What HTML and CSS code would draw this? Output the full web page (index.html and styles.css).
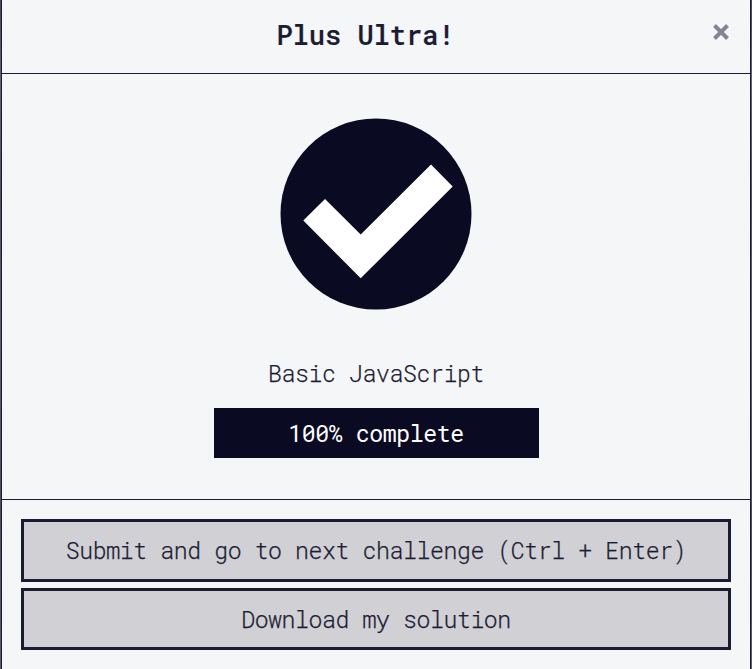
FILE: index.html
```
<!DOCTYPE html>
<html lang="en">
<head>
<meta charset="utf-8">
<title>Plus Ultra!</title>
<link rel="stylesheet" href="styles.css">
</head>
<body>
<div class="modal">
  <header class="modal-header">
    <h1 class="title">Plus Ultra!</h1>
    <button class="close" aria-label="Close"><svg width="18" height="16" viewBox="0 0 18 16"><path d="M2.5 1.5 15.5 14.5M15.5 1.5 2.5 14.5"/></svg></button>
  </header>
  <main class="modal-body">
    <svg class="check" width="192" height="192" viewBox="0 0 192 192">
      <circle cx="96" cy="96" r="95.5"/>
      <path d="M23.3 102.5 45 81 80.7 116.5 151 46.5 172.7 68.5 80.7 160.3Z"/>
    </svg>
    <p class="course">Basic JavaScript</p>
    <div class="progress">100% complete</div>
  </main>
  <footer class="modal-footer">
    <button class="btn btn-submit">Submit and go to next challenge (Ctrl + Enter)</button>
    <button class="btn">Download my solution</button>
  </footer>
</div>
</body>
</html>
```
FILE: styles.css
```
* { box-sizing: border-box; }
body {
  margin: 0;
  height: 669px;
  padding: 0 1px;
  overflow: hidden;
  background: linear-gradient(#484951, #62636a 12%, #555153 30%, #606167 50%, #4c4e59 75%, #5c5c62);
  color: #1b1b32;
  font: 300 23.2px/34px "Roboto Mono", "DejaVu Sans Mono", monospace;
  letter-spacing: -0.43px;
}
.modal {
  height: 669px;
  background: #f5f6f7;
  border: solid #1b1b32;
  border-width: 0 1px;
}
.modal-header {
  position: relative;
  height: 74px;
  padding: 18px 21px 0 0;
  border-bottom: 1px solid #1b1b32;
}
.title {
  margin: 0;
  text-align: center;
  font-size: 27px;
  line-height: 34px;
  font-weight: 500;
  letter-spacing: 0;
  -webkit-text-stroke: 0.2px #1b1b32;
}
.close {
  position: absolute;
  top: 24px;
  right: 20px;
  width: 18px;
  height: 16px;
  padding: 0;
  border: 0;
  background: none;
}
.close svg { display: block; }
.close path { stroke: #858591; stroke-width: 4; }
.modal-body {
  height: 426px;
  padding-top: 44px;
  border-bottom: 1px solid #1b1b32;
  display: flex;
  flex-direction: column;
  align-items: center;
}
.check { flex: none; }
.check circle { fill: #0a0a23; }
.check path { fill: #fff; }
.course { margin: 46px 0 18px; -webkit-text-stroke: 0.25px #1b1b32; }
.progress {
  width: 325px;
  height: 50px;
  line-height: 50px;
  margin-left: 1px;
  padding-right: 1px;
  text-align: center;
  background: #0a0a23;
  color: #fff;
  font-weight: 400;
}
.modal-footer {
  display: flex;
  flex-direction: column;
  gap: 6px;
  padding: 19px;
}
.btn {
  height: 62px;
  padding: 0;
  border: 3px solid #1b1b32;
  background: #d0d0d5;
  color: #1b1b32;
  font: inherit;
  letter-spacing: inherit;
  -webkit-text-stroke: 0.25px #1b1b32;
}
.btn-submit { height: 63px; padding-bottom: 1px; }
```
